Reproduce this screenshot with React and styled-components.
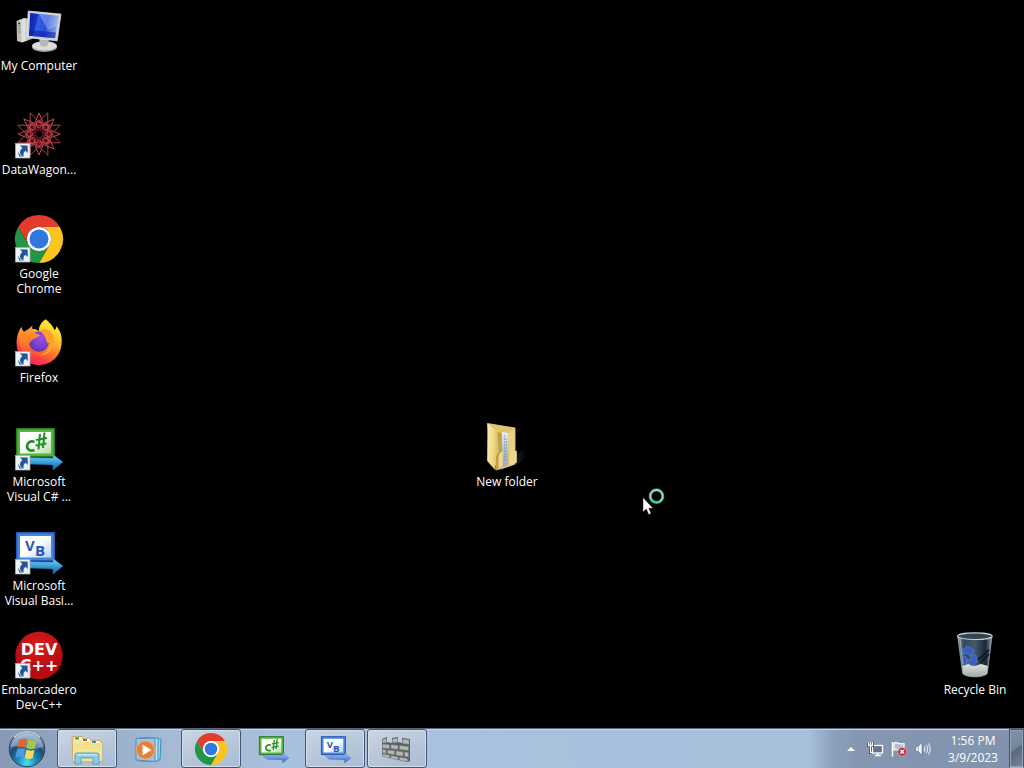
import React from "react";
import styled, { createGlobalStyle } from "styled-components";

const GlobalStyle = createGlobalStyle`
  *, *::before, *::after { box-sizing: border-box; }
  body { margin: 0; background: #000; font-family: "Open Sans", "Noto Sans", sans-serif; }
  button { font: inherit; color: inherit; border: 0; padding: 0; background: none; cursor: default; }
  svg { display: block; overflow: visible; flex: none; }
`;

const Screen = styled.div`
  display: flex;
  flex-direction: column;
  min-height: 100vh;
  background: #000;
`;

const Desktop = styled.main`
  position: relative;
  flex: 1;
  display: grid;
  grid-template-columns: repeat(auto-fill, 78px);
  grid-auto-rows: 104px;
`;

const Shortcut = styled.button`
  grid-column: ${(p) => p.$col};
  grid-row: ${(p) => p.$row};
  display: flex;
  flex-direction: column;
  align-items: center;
  gap: 2px;
  padding-top: 8px;
`;

const ShortcutLabel = styled.span`
  color: #fff;
  font-size: 12px;
  line-height: 15px;
  white-space: pre-line;
  text-align: center;
`;

const Pointer = styled.div`
  position: absolute;
  left: 642px;
  top: 488px;
  pointer-events: none;
`;

const Taskbar = styled.footer`
  display: flex;
  align-items: stretch;
  height: 40px;
  border-top: 1px solid #59677a;
  box-shadow: inset 0 1px 0 #c5d3e4;
  background: linear-gradient(90deg, #8799b4 0, #91a5c0 60px, #a4bad5 170px, #a9c2df 320px,
    #a8c0dc calc(100% - 216px), #8ba0bd calc(100% - 190px), #8496b1 calc(100% - 165px), #8193ac 100%);
`;

const StartButton = styled.button`
  display: flex;
  align-items: center;
  justify-content: center;
  width: 54px;
`;

const Tasks = styled.nav`
  display: flex;
  flex: 1;
  gap: 2px;
  padding-left: 3px;
`;

const TaskButton = styled.button`
  display: flex;
  align-items: center;
  justify-content: center;
  width: 60px;
  border-radius: 3px;
  border: 1px solid ${(p) => (p.$open ? "#45566e" : "transparent")};
  background: ${(p) =>
    p.$open ? "linear-gradient(160deg, #cbd6e4 0%, #b8c7da 50%, #a8bdd7 100%)" : "transparent"};
  box-shadow: ${(p) => (p.$open ? "inset 0 0 0 1px #d4deeb" : "none")};
`;

const Tray = styled.div`
  display: flex;
  align-items: center;
  gap: 8px;
  padding-right: 6px;
`;

const TrayButton = styled.button`
  display: flex;
  align-items: center;
  justify-content: center;
  width: 16px;
  height: 24px;
`;

const Clock = styled.button`
  width: 60px;
  margin-left: 4px;
  color: #fff;
  font-size: 12px;
  line-height: 17px;
  text-align: center;
`;

const ShowDesktop = styled.button`
  width: 15px;
  border: 1px solid #48566a;
  border-bottom-color: #a2b0c2;
  background: linear-gradient(145deg, #8291a5 0%, #76869a 48%, #59687c 52%, #77879c 100%);
  box-shadow: inset 0 0 0 1px #95a3b6;
`;

const LinkBadge = () => (
  <g>
    <rect x="0.5" y="31.5" width="14.5" height="14.5" fill="#edf1f5" stroke="#a5acb5" strokeWidth="0.8" />
    <path
      d="M4.8 33.6 L12.6 33.4 L12.8 41 L10.4 38.7 C8.6 40.2 8.1 42 8.8 44.4 C4.6 43.4 3.6 39.2 7.3 35.9 Z"
      fill="#215799"
    />
    <path d="M4.4 44.6 C3.3 43 3 41 3.6 39.5 C4.1 42 5.3 43.6 8 44.7 Z" fill="#3e75b1" />
  </g>
);

const ComputerIcon = () => (
  <svg width="48" height="48" viewBox="0 0 48 48" aria-hidden="true">
    <defs>
      <linearGradient id="pcScreen" x1="0" y1="0" x2="1" y2="0.2">
        <stop offset="0" stopColor="#0a1f96" />
        <stop offset="0.3" stopColor="#1236c8" />
        <stop offset="0.34" stopColor="#3560df" />
        <stop offset="0.65" stopColor="#2a50d8" />
        <stop offset="1" stopColor="#7f9fe6" />
      </linearGradient>
      <linearGradient id="pcCase" x1="0" x2="1">
        <stop offset="0" stopColor="#c9c9c7" />
        <stop offset="0.5" stopColor="#e2e2e0" />
        <stop offset="1" stopColor="#8d8e90" />
      </linearGradient>
    </defs>
    <path d="M1.6 13 L9 10 L17 11 L17 31 L7 34.5 L2 32.8 Z" fill="url(#pcCase)" />
    <path d="M2 13.3 L5.8 13.8 L6.4 34 L2 32.7 Z" fill="#bcbcba" />
    <path d="M3 18h2.5M3 21h2.6M3 24h2.6" stroke="#777" strokeWidth="0.8" />
    <circle cx="4.1" cy="15.6" r="1" fill="#333" />
    <ellipse cx="29.5" cy="39" rx="12.5" ry="5" fill="#a4a5a5" />
    <ellipse cx="29.5" cy="37.8" rx="12.3" ry="4.5" fill="#dcdcda" />
    <path d="M24 29 L34 30 L33 37 C31 39 27 39 25 37 Z" fill="#b6b8ba" />
    <path d="M13.2 3 L46 6.1 L42.2 32.8 L12 29.7 Z" fill="#c9d0d8" stroke="#e6eaed" strokeWidth="0.7" />
    <path d="M15.2 5 L43.5 8 L40 30.2 L14 27.7 Z" fill="url(#pcScreen)" />
    <path d="M24 6 L43.5 8 L42 18 L33 22 Z" fill="#cadaf5" opacity="0.35" />
    <path d="M14.3 22 L41 24.5 L40 30.2 L14 27.7 Z" fill="#0c22a5" opacity="0.6" />
  </svg>
);

const starPoints = (count, step, radius, phase) =>
  Array.from({ length: count }, (_, i) => {
    const a = ((i * step) / count) * Math.PI * 2 + phase;
    return `${24 + Math.cos(a) * radius},${22 + Math.sin(a) * radius}`;
  }).join(" ");

const WagonIcon = () => (
  <svg width="48" height="48" viewBox="0 0 48 48" aria-hidden="true">
    <circle cx="24" cy="22" r="12" fill="#5b151d" opacity="0.3" />
    <g fill="none" strokeWidth="1">
      <polygon points={starPoints(8, 3, 23, 0.39)} stroke="#a8434e" />
      {Array.from({ length: 8 }, (_, i) => (
        <g key={i} transform={`rotate(${i * 45} 24 22)`}>
          <path d="M34 17.5 L45 22 L34 26.5" stroke="#c84753" />
          <path d="M28 19.5 Q34 13.5 38 22 Q34 30.5 28 24.5" stroke="#a32d38" />
          <circle cx="33.5" cy="22" r="2.8" stroke="#dd3f4d" />
        </g>
      ))}
    </g>
    <circle cx="24" cy="22" r="4" fill="#090102" stroke="#8f2630" strokeWidth="0.7" />
    <LinkBadge />
  </svg>
);

const ChromeShape = () => (
  <g>
    <path d="M3.2 12 A24 24 0 0 1 44.8 12 L24 12 A12 12 0 0 0 13.6 30 Z" fill="#e33b2e" />
    <path d="M44.8 12 A24 24 0 0 1 24 48 L34.4 30 A12 12 0 0 0 24 12 Z" fill="#fcc51c" />
    <path d="M3.2 12 A24 24 0 0 0 24 48 L34.4 30 A12 12 0 0 1 13.6 30 Z" fill="#239547" />
    <circle cx="24" cy="24" r="12" fill="#fff" />
    <circle cx="24" cy="24" r="9.5" fill="#2f78e0" />
  </g>
);

const ChromeIcon = ({ size = 48, linked }) => (
  <svg width={size} height={size} viewBox="0 0 48 48" aria-hidden="true">
    <g transform={linked ? "translate(0 -1)" : undefined}>
      <ChromeShape />
    </g>
    {linked && <LinkBadge />}
  </svg>
);

const FirefoxIcon = () => (
  <svg width="48" height="48" viewBox="0 0 48 48" aria-hidden="true">
    <defs>
      <linearGradient id="foxBody" x1="0.8" y1="0" x2="0.25" y2="1">
        <stop offset="0" stopColor="#fff14a" />
        <stop offset="0.3" stopColor="#ffc928" />
        <stop offset="0.55" stopColor="#ff802c" />
        <stop offset="0.8" stopColor="#ff3c48" />
        <stop offset="1" stopColor="#e9206d" />
      </linearGradient>
      <linearGradient id="foxHead" x1="0.5" y1="0" x2="0.4" y2="1">
        <stop offset="0" stopColor="#ffa52f" />
        <stop offset="0.55" stopColor="#ff7d28" />
        <stop offset="1" stopColor="#ff4b3d" />
      </linearGradient>
      <radialGradient id="foxGlobe" cx="0.6" cy="0.3" r="0.8">
        <stop offset="0" stopColor="#a04ff0" />
        <stop offset="0.6" stopColor="#7440c9" />
        <stop offset="1" stopColor="#523099" />
      </radialGradient>
    </defs>
    <path
      d="M30.5 -0.8 C34 2 38 5.5 39.3 10 C41 9 41.5 7.5 41.5 6 C45.5 11 47.4 17 46.6 24 C45.4 36.5 35.8 45 24 45 C11 45 1.6 35.5 1.6 23.5 C1.6 17 3 11 6.8 7 C7 10 7.5 11 9 12 C12 9 18 7 24 11 C23.5 6.5 26 2.5 30.5 -0.8 Z"
      fill="url(#foxBody)"
    />
    <circle cx="24" cy="21.5" r="10.2" fill="url(#foxGlobe)" />
    <path d="M25 11 C30 7 37 10 38.8 18 C41 29 32 37 24 35 C31 34 35 29 34 23 C31 24 32 20 30 17 C28.5 14.5 27 12 25 11 Z" fill="#ff9f28" />
    <path
      d="M6.8 7 C7 10 8 11.6 9.8 12.3 L17.5 5.5 C16.6 8.5 17.2 11 20 13 L25 15.2 C22.5 17.5 18.5 18.2 16.5 20.5 C15 22.5 14 23 14 24.3 C13.6 30.5 20 34 27.5 31.5 C24 38 12 38.5 7.5 30.5 C3.5 24 2 15.5 6.8 7 Z"
      fill="url(#foxHead)"
    />
    <LinkBadge />
  </svg>
);

const BoardIcon = ({ kind, linked }) => {
  const sharp = kind === "cs";
  const dark = sharp ? "#257f22" : "#275cb0";
  const mid = sharp ? "#5ab53c" : "#4386da";
  const arrow = linked ? `arrow-${kind}-large` : `arrow-${kind}-small`;
  const board = linked ? `board-${kind}-large` : `board-${kind}-small`;
  return (
    <svg width={linked ? 48 : 32} height={linked ? 48 : 32} viewBox={linked ? "0 0 48 48" : "-2 -1 50 50"} aria-hidden="true">
      <defs>
        <linearGradient id={board} x2="1" y2="1">
          <stop offset="0.45" stopColor="#fff" />
          <stop offset="1" stopColor={sharp ? "#b6dba9" : "#b8cdf1"} />
        </linearGradient>
        <linearGradient id={arrow} x2="0" y2="1">
          <stop offset="0" stopColor={linked ? "#83d6f6" : "#a5c3f4"} />
          <stop offset="0.6" stopColor={linked ? "#2a91ce" : "#5f87dc"} />
          <stop offset="1" stopColor={linked ? "#245caa" : "#3d62c0"} />
        </linearGradient>
      </defs>
      <rect x="1.7" y="4.7" width="37.6" height="28" fill={mid} stroke={dark} strokeWidth="1.5" />
      <rect x="5" y="8" width="31" height="21.5" fill={`url(#${board})`} />
      <path d="M6 33.5 L38 34 L38 30.5 L48 38 L38 46 L38 41 L14 40 Z" fill={`url(#${arrow})`} stroke={linked ? "#296caf" : "#4468b8"} strokeWidth="0.5" />
      {sharp ? (
        <g fill="none" stroke="#279126" strokeWidth="2.8">
          <path d="M19.5 17.8 C10 15 9 29 19.5 26.2" />
          <path d="M25 10 L23.5 25.5 M29.5 8.5 L28 24 M21 16 L32 14 M20.5 21.5 L31.5 19.5" strokeWidth="2.1" />
        </g>
      ) : (
        <g fill="#2857b3" fontFamily="Open Sans, Noto Sans, sans-serif" fontWeight="700">
          <text x="10" y="23" fontSize="15">V<tspan x="20" y="28">B</tspan></text>
        </g>
      )}
      {linked && <LinkBadge />}
    </svg>
  );
};

const DevIcon = () => (
  <svg width="48" height="48" viewBox="0 0 48 48" aria-hidden="true">
    <defs>
      <radialGradient id="devRed" cx="0.5" cy="0.3">
        <stop offset="0" stopColor="#d81e20" />
        <stop offset="1" stopColor="#b90c12" />
      </radialGradient>
    </defs>
    <circle cx="24" cy="23.5" r="23.7" fill="url(#devRed)" />
    <text fill="#fff" fontFamily="DejaVu Sans, sans-serif" fontWeight="700" fontSize="16" textAnchor="middle">
      <tspan x="24" y="23">DEV</tspan>
      <tspan x="24" y="39">C++</tspan>
    </text>
    <LinkBadge />
  </svg>
);

const FolderIcon = () => (
  <svg width="48" height="48" viewBox="0 0 48 48" aria-hidden="true">
    <defs>
      <linearGradient id="foldFront" x2="1" y2="0.2">
        <stop offset="0" stopColor="#fbefaf" />
        <stop offset="0.6" stopColor="#f0d985" />
        <stop offset="1" stopColor="#d9bb62" />
      </linearGradient>
      <linearGradient id="foldPaper" x2="0" y2="1">
        <stop offset="0" stopColor="#e7edf3" />
        <stop offset="0.6" stopColor="#aabbc9" />
        <stop offset="1" stopColor="#b0a2d5" />
      </linearGradient>
      <linearGradient id="foldShade">
        <stop offset="0" stopColor="#303336" />
        <stop offset="1" stopColor="#000" />
      </linearGradient>
    </defs>
    <path d="M31 32 L40 26 L44 30 L37 39 L24 44 Z" fill="url(#foldShade)" />
    <path d="M4.5 -0.5 L32 4 L32 40 L18 45 L10 39 Z" fill="#dfc46c" stroke="#f7e8a7" strokeWidth="0.7" />
    <path d="M19 8 L25.5 9 L25 41 L18 44 Z" fill="url(#foldPaper)" />
    <path d="M21.5 11v27M23.3 14v24" stroke="#7893ab" strokeWidth="0.7" strokeDasharray="2 1" />
    <path d="M26 8 L31.5 6.5 L32 38 L26 41 Z" fill="#e7d084" />
    <path d="M4.5 -0.5 L14.5 8 L15.8 28 L13 32 L12.6 46.5 L4.2 37 Z" fill="url(#foldFront)" />
    <path d="M14.5 8 L18.5 9 L19 28 L17.5 30 L18 45 L13 46.5 L13 32 L15.8 28 Z" fill="#c29f45" />
    <path d="M17 29 L20 27 L19.5 42 L15.5 46 L15.5 32 Z" fill="#eed785" />
    <path d="M27 31 L29 26 L33.8 27 L33.8 38.5 L26.5 41.5 Z" fill="#edd989" />
  </svg>
);

const BinIcon = () => (
  <svg width="48" height="48" viewBox="0 0 48 48" aria-hidden="true">
    <defs>
      <linearGradient id="binGlass">
        <stop offset="0" stopColor="#8c9dab" />
        <stop offset="0.18" stopColor="#30485b" />
        <stop offset="0.5" stopColor="#46586a" />
        <stop offset="0.82" stopColor="#162936" />
        <stop offset="1" stopColor="#919fa9" />
      </linearGradient>
      <linearGradient id="binFloor" x2="0" y2="1">
        <stop offset="0" stopColor="#dfe2dd" />
        <stop offset="1" stopColor="#a3aaae" />
      </linearGradient>
    </defs>
    <path d="M6.7 4 L41 4 L36.3 41.5 C32 46 16 46 11.6 41.5 Z" fill="url(#binGlass)" stroke="#a8b6bf" strokeWidth="0.7" />
    <path d="M27 28 L38 18 M29 31 L38 22" stroke="#101d28" strokeWidth="2" />
    <path d="M11 34 L17 32 L24 34 L30 32 L37 34 L36 42 C31 45.5 17 45.5 12 42 Z" fill="url(#binFloor)" />
    <g fill="#3a5fc0" stroke="#5f83d3" strokeWidth="0.6">
      <path d="M11 18 L16 14 L22 17 L23 21 L19 24 L16 21 L12 23 Z" />
      <path d="M20 23 L25 23 L26 30 L21 34 L17 31 L16 27 L20 28 Z" />
      <path d="M10 26 L14 24 L16 27 L16 32 L12 31 Z" />
    </g>
    <ellipse cx="23.9" cy="4.2" rx="17.2" ry="3.3" fill="#344451" stroke="#c4cdd3" strokeWidth="1.2" />
    <path d="M9 7 L13 41" stroke="#bcc9d1" strokeWidth="1" opacity="0.7" />
  </svg>
);

const StartOrb = () => (
  <svg width="38" height="38" viewBox="0 0 38 38" aria-hidden="true">
    <defs>
      <radialGradient id="orbBase" cx="0.5" cy="0.88" r="0.85">
        <stop offset="0" stopColor="#47e2f6" />
        <stop offset="0.32" stopColor="#178bb8" />
        <stop offset="0.62" stopColor="#1e4b78" />
        <stop offset="1" stopColor="#a9bdd1" />
      </radialGradient>
    </defs>
    <circle cx="19" cy="19" r="17.8" fill="url(#orbBase)" stroke="#28435f" />
    <path d="M2.8 17 A16.5 16.5 0 0 1 35.2 17 Q27 20 19 18 Q10 15 2.8 17Z" fill="#d9e5f0" opacity="0.4" />
    <path d="M11.2 10 Q15 7.4 19 9.2 L17.5 17.6 Q13.5 15.7 9.4 18.2 Z" fill="#e4632e" />
    <path d="M20.2 9.8 Q24.3 12 28.6 9.8 L26.8 18.3 Q22.6 20.4 18.7 18.1 Z" fill="#a2c84a" />
    <path d="M9.1 19.5 Q13 17.3 17.2 19 L15.6 27.4 Q11.6 25.8 7.4 28 Z" fill="#4c9bdc" />
    <path d="M18.4 19.6 Q22.5 21.8 26.5 19.7 L24.8 28 Q20.8 30.2 16.8 28 Z" fill="#f8d85a" />
    <path d="M6 7.5 A17 17 0 0 1 32 7.5" fill="none" stroke="#eef5fb" strokeWidth="1.3" opacity="0.7" />
  </svg>
);

const ExplorerIcon = () => (
  <svg width="32" height="32" viewBox="0 0 32 32" aria-hidden="true">
    <path d="M1 5 L2 3.5 H11 L12 6 H19 L20 7.5 H29 L31 9 V29 H2 Z" fill="#e8cf76" stroke="#bb9e4a" strokeWidth="0.7" />
    <path d="M3 4.5h8v3H3zM11 6h8v3h-8zM20 8h9v3h-9z" fill="#fffdf0" />
    <path d="M4 4.5h4v2H4z" fill="#2d9c48" />
    <path d="M12 6h4v2h-4z" fill="#d84c31" />
    <path d="M21 8h4v2h-4z" fill="#398fcb" />
    <path d="M2 8 H12 L14 10 H31 V28 H2 Z" fill="#f6e493" />
    <path d="M3 12h27M3 15h27" stroke="#e8d57f" strokeWidth="0.8" />
    <path d="M4 31 V22 Q4 20 6 20 H26 Q28 20 28 22 V31 H22 V25 H10 V31 Z" fill="#8bcbe7" stroke="#4c9dc3" strokeWidth="0.9" />
    <path d="M6 21.8h20" stroke="#d3f1fc" strokeWidth="1.2" />
  </svg>
);

const PlayerIcon = () => (
  <svg width="32" height="32" viewBox="0 0 32 32" aria-hidden="true">
    <path d="M10 5 L28 6 L27 27 L10 28 Z" fill="#a7d4ee" stroke="#3b8dbc" />
    <path d="M7 5 L25 5 L25 28 L7 28 Z" fill="#c1e2f3" stroke="#3b8dbc" />
    <path d="M3 5.5 L22 5 L22 28.5 L3 27 Z" fill="#9cc4e2" stroke="#4b8db8" />
    <circle cx="12.5" cy="17" r="9" fill="#e87f36" stroke="#f3a56b" />
    <path d="M9.5 11.5 L18.5 17 L9.5 22.5 Z" fill="#fff" />
  </svg>
);

const WallIcon = () => (
  <svg width="32" height="32" viewBox="0 0 32 32" aria-hidden="true">
    <path d="M1 6 L6 4 V9 L11 10 V5 L17 4 V9 L21 10 V5 L29 6 V28 L26 29 L1 23 Z" fill="#5c6062" />
    <g fill="#b6b8b7" stroke="#797d7e" strokeWidth="0.5">
      <path d="M1.5 6.5l4-1v4l-4 .3zM11.5 6l5-1v4.5l-5 .3zM21.5 6l6.5.7v4.5l-6.5-.8z" />
      <path d="M1.5 11l7 .8v3.7l-7-.5zM10 11.8l7 .6v4l-7-.8zM18.5 12.5l9 1v4l-9-1z" />
      <path d="M1.5 16.5l3.5.4v3.5l-3.5-.6zM6.5 17l7 .7v4l-7-1.1zM15 18l7 .8v4.5l-7-1.3zM23.5 19l4 .5V24l-4-.7z" />
      <path d="M1.5 21l7 1.3V25l-7-1.8zM10 22.6l7 1.3v3l-7-1.6zM18.5 24.2l8 1.4v2.9l-8-1.3z" />
    </g>
  </svg>
);

const NetworkIcon = () => (
  <svg width="16" height="16" viewBox="0 0 16 16" aria-hidden="true">
    <rect x="5.5" y="4.5" width="10" height="7.5" fill="#66758c" stroke="#fff" strokeWidth="1.3" />
    <path d="M8 14.5h6M10.8 12v2.5" stroke="#fff" strokeWidth="1.3" />
    <path d="M1.5 1v3.5h4V1M3.5 4v7.5H5" fill="none" stroke="#3e4b60" strokeWidth="3" />
    <path d="M1.5 1v3.5h4V1M3.5 1v10.5H5" fill="none" stroke="#fff" strokeWidth="1.3" />
  </svg>
);

const FlagIcon = () => (
  <svg width="16" height="16" viewBox="0 0 16 16" aria-hidden="true">
    <path d="M1.5 1v14.5" stroke="#fff" strokeWidth="1.5" />
    <path d="M3 2 C6 .5 8 4 13 2.5 V9 C9 10.5 6 7.5 3 9 Z" fill="#b3bfcf" stroke="#fff" strokeWidth="1.2" />
    <circle cx="11.2" cy="10.8" r="4.3" fill="#cf2434" stroke="#f0a4a9" strokeWidth="0.7" />
    <path d="M9.5 9l3.5 3.6M13 9l-3.5 3.6" stroke="#fff" strokeWidth="1.5" />
  </svg>
);

const SpeakerIcon = () => (
  <svg width="16" height="16" viewBox="0 0 16 16" aria-hidden="true">
    <path d="M0.8 5.2h2.5L7 1.5v12.8l-3.7-3.7H.8z" fill="#f6f8fa" stroke="#52627a" strokeWidth="0.6" />
    <path d="M3.3 5v6" stroke="#718096" strokeWidth="0.7" />
    <path d="M9 5.5q2 2.5 0 5M11.2 4q3 4 0 8M13.3 2.5q4 5.5 0 11" fill="none" stroke="#e4e9f0" strokeWidth="1.1" />
  </svg>
);

const BusyPointer = () => (
  <svg width="24" height="28" viewBox="0 0 24 28" role="img" aria-label="Working in background">
    <circle cx="14.5" cy="8.2" r="6.4" fill="none" stroke="#247d70" strokeWidth="3" />
    <circle cx="14.5" cy="8.2" r="6.2" fill="none" stroke="#9bd8cd" strokeWidth="1.8" />
    <path d="M9.2 11 A6.2 6.2 0 0 0 18 13.4" fill="none" stroke="#39d2a4" strokeWidth="2" />
    <path d="M1 9.5 L1 24 L4.3 21 L6.7 26.5 L9 25.5 L6.8 20.2 H11 Z" fill="#fff" stroke="#222" strokeWidth="0.5" />
  </svg>
);

const shortcuts = [
  { label: "My Computer", col: 1, row: 1, icon: <ComputerIcon /> },
  { label: "DataWagon...", col: 1, row: 2, icon: <WagonIcon /> },
  { label: "Google\nChrome", col: 1, row: 3, icon: <ChromeIcon linked /> },
  { label: "Firefox", col: 1, row: 4, icon: <FirefoxIcon /> },
  { label: "Microsoft\nVisual C# ...", col: 1, row: 5, icon: <BoardIcon kind="cs" linked /> },
  { label: "Microsoft\nVisual Basi...", col: 1, row: 6, icon: <BoardIcon kind="vb" linked /> },
  { label: "Embarcadero\nDev-C++", col: 1, row: 7, icon: <DevIcon /> },
  { label: "New folder", col: 7, row: 5, icon: <FolderIcon /> },
  { label: "Recycle Bin", col: -2, row: 7, icon: <BinIcon /> },
];

const tasks = [
  { name: "Windows Explorer", open: true, icon: <ExplorerIcon /> },
  { name: "Media Player", open: false, icon: <PlayerIcon /> },
  { name: "Google Chrome", open: true, icon: <ChromeIcon size={32} /> },
  { name: "Visual C#", open: false, icon: <BoardIcon kind="cs" /> },
  { name: "Visual Basic", open: true, icon: <BoardIcon kind="vb" /> },
  { name: "Firewall", open: true, icon: <WallIcon /> },
];

export default function App() {
  return (
    <Screen>
      <GlobalStyle />
      <Desktop>
        {shortcuts.map((s) => (
          <Shortcut key={s.label} $col={s.col} $row={s.row}>
            {s.icon}
            <ShortcutLabel>{s.label}</ShortcutLabel>
          </Shortcut>
        ))}
        <Pointer>
          <BusyPointer />
        </Pointer>
      </Desktop>
      <Taskbar>
        <StartButton aria-label="Start">
          <StartOrb />
        </StartButton>
        <Tasks aria-label="Programs">
          {tasks.map((t) => (
            <TaskButton key={t.name} aria-label={t.name} $open={t.open}>
              {t.icon}
            </TaskButton>
          ))}
        </Tasks>
        <Tray>
          <TrayButton aria-label="Show hidden icons">
            <svg width="8" height="4" viewBox="0 0 8 4" aria-hidden="true">
              <path d="M0 4 L4 0 L8 4 Z" fill="#fff" />
            </svg>
          </TrayButton>
          <TrayButton aria-label="Network"><NetworkIcon /></TrayButton>
          <TrayButton aria-label="Action Center"><FlagIcon /></TrayButton>
          <TrayButton aria-label="Volume"><SpeakerIcon /></TrayButton>
          <Clock>
            <div>1:56 PM</div>
            <div>3/9/2023</div>
          </Clock>
        </Tray>
        <ShowDesktop aria-label="Show desktop" />
      </Taskbar>
    </Screen>
  );
}
